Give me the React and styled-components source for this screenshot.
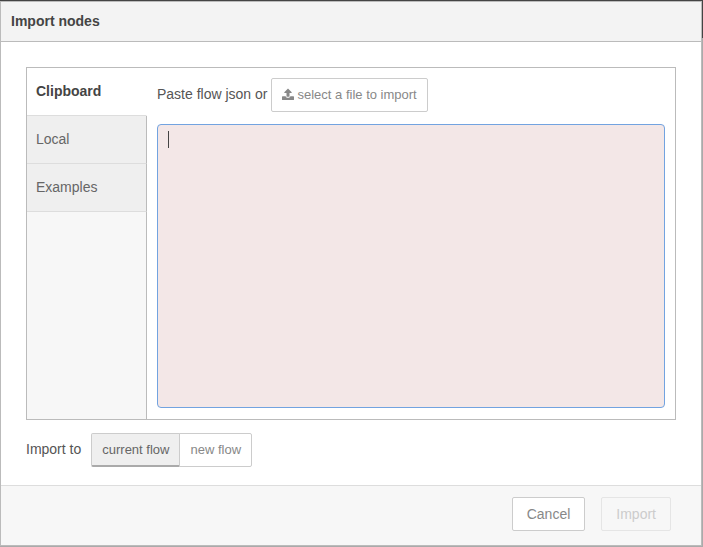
import React, { useState } from "react";
import styled, { createGlobalStyle, css } from "styled-components";

const GlobalStyle = createGlobalStyle`
  *, *::before, *::after { box-sizing: border-box; }
  body {
    margin: 0;
    font: 14px/20px "Liberation Sans", Arial, Helvetica, sans-serif;
    color: #555;
  }
  button, textarea { font-family: inherit; margin: 0; }
`;

const Backdrop = styled.div`
  display: flex;
  min-height: 100vh;
  padding: 1px 1px 1px 0;
  background: linear-gradient(#444 38px, #aaa 38px);
`;

const Dialog = styled.div`
  flex: 1;
  display: flex;
  flex-direction: column;
  border: 1px solid #bbb;
  background: #fff;
`;

const TitleBar = styled.header`
  padding: 9px 10px 10px;
  border-bottom: 1px solid #bbb;
  background: #f3f3f3;
`;

const Title = styled.h1`
  margin: 0;
  font-size: 14px;
  line-height: 20px;
  color: #444;
`;

const Body = styled.main`
  flex: 1;
  display: flex;
  flex-direction: column;
  gap: 13px;
  padding: 25px 25px 18px;
`;

const Panel = styled.div`
  flex: 1;
  display: flex;
  border: 1px solid #bbb;
`;

const TabList = styled.div`
  display: flex;
  flex-direction: column;
  flex: 0 0 120px;
  background: linear-gradient(#bbb, #bbb) right / 1px 100% no-repeat #f7f7f7;
`;

const Tab = styled.button`
  height: 48px;
  padding: 0 9px 2px;
  border: 0;
  border-right: 1px solid #bbb;
  border-bottom: 1px solid #ddd;
  background: #efefef;
  color: #666;
  font-size: 14px;
  text-align: left;
  cursor: pointer;

  ${({ $active }) =>
    $active &&
    css`
      border-right-color: #fff;
      background: #fff;
      color: #444;
      font-weight: bold;
    `}
`;

const Content = styled.section`
  flex: 1;
  display: flex;
  flex-direction: column;
  gap: 12px;
  padding: 10px 10px 11px;
`;

const Row = styled.div`
  display: flex;
  align-items: center;
  gap: ${({ $gap }) => $gap}px;
`;

const Label = styled.label`
  padding-bottom: 2px;
`;

const Button = styled.button`
  height: 34px;
  padding: 0 10px 2px;
  border: 1px solid #ccc;
  border-radius: 2px;
  background: #fff;
  color: #888;
  font-size: 13px;
  white-space: nowrap;
  cursor: pointer;
`;

const FileButton = styled(Button)`
  display: flex;
  align-items: center;
  gap: 4px;
`;

const ToggleGroup = styled.div`
  display: flex;
`;

const Toggle = styled(Button)`
  &:first-child { border-radius: 2px 0 0 2px; }
  & + & {
    margin-left: -1px;
    border-radius: 0 2px 2px 0;
  }

  ${({ $selected }) =>
    $selected &&
    css`
      padding-bottom: 1px;
      border-bottom: 2px solid #aaa;
      background: #efefef;
      color: #666;
    `}
`;

const Editor = styled.div`
  position: relative;
  flex: 1;
  display: flex;
`;

const JsonInput = styled.textarea`
  flex: 1;
  padding: 5px 10px;
  border: 1px solid #72a3e0;
  border-radius: 4px;
  outline: 0;
  background: #f3e7e7;
  color: #555;
  font-size: 14px;
  line-height: 20px;
  resize: none;
  caret-color: transparent;
`;

const Caret = styled.span`
  position: absolute;
  top: 7px;
  left: 11px;
  width: 1px;
  height: 17px;
  background: #444;
`;

const Footer = styled.footer`
  display: flex;
  justify-content: flex-end;
  gap: 16px;
  padding: 11px 30px 14px;
  border-top: 1px solid #ddd;
  background: #f7f7f7;
`;

const ActionButton = styled(Button)`
  padding: 0 14px;
  font-size: 14px;

  &:disabled {
    border-color: #e5e5e5;
    background: #f7f7f7;
    color: #ccc;
    cursor: default;
  }
`;

const UploadIcon = () => (
  <svg width="12" height="13" viewBox="0 0 12 13" fill="currentColor" aria-hidden="true">
    <path d="M6 0.500L9.700 4.200Q10 5 9.300 5H7.500V8.300Q7.500 8.800 7 8.800H5Q4.500 8.800 4.500 8.300V5H2.700Q2 5 2.300 4.200Z" />
    <path d="M0.600 8.300H3.600Q4 9.700 5 9.700H7Q8 9.700 8.400 8.300H11.400Q12 8.300 12 8.900V11.400Q12 12 11.400 12H0.600Q0 12 0 11.400V8.900Q0 8.300 0.600 8.300Z" />
  </svg>
);

const TABS = ["Clipboard", "Local", "Examples"];
const TARGETS = ["current flow", "new flow"];

export default function App() {
  const [tab, setTab] = useState(TABS[0]);
  const [target, setTarget] = useState(TARGETS[0]);
  const [json, setJson] = useState("");

  return (
    <>
      <GlobalStyle />
      <Backdrop>
        <Dialog role="dialog" aria-labelledby="dialog-title">
          <TitleBar>
            <Title id="dialog-title">Import nodes</Title>
          </TitleBar>
          <Body>
            <Panel>
              <TabList role="tablist">
                {TABS.map((name) => (
                  <Tab
                    key={name}
                    type="button"
                    role="tab"
                    aria-selected={tab === name}
                    $active={tab === name}
                    onClick={() => setTab(name)}
                  >
                    {name}
                  </Tab>
                ))}
              </TabList>
              <Content>
                <Row $gap={3}>
                  <Label htmlFor="flow-json">Paste flow json or</Label>
                  <FileButton type="button">
                    <UploadIcon />
                    select a file to import
                  </FileButton>
                </Row>
                <Editor>
                  <JsonInput
                    id="flow-json"
                    value={json}
                    onChange={(event) => setJson(event.target.value)}
                  />
                  {json === "" && <Caret />}
                </Editor>
              </Content>
            </Panel>
            <Row $gap={10}>
              <Label as="span" id="target-label">Import to</Label>
              <ToggleGroup role="group" aria-labelledby="target-label">
                {TARGETS.map((name) => (
                  <Toggle
                    key={name}
                    type="button"
                    aria-pressed={target === name}
                    $selected={target === name}
                    onClick={() => setTarget(name)}
                  >
                    {name}
                  </Toggle>
                ))}
              </ToggleGroup>
            </Row>
          </Body>
          <Footer>
            <ActionButton type="button">Cancel</ActionButton>
            <ActionButton type="button" disabled={json === ""}>
              Import
            </ActionButton>
          </Footer>
        </Dialog>
      </Backdrop>
    </>
  );
}
